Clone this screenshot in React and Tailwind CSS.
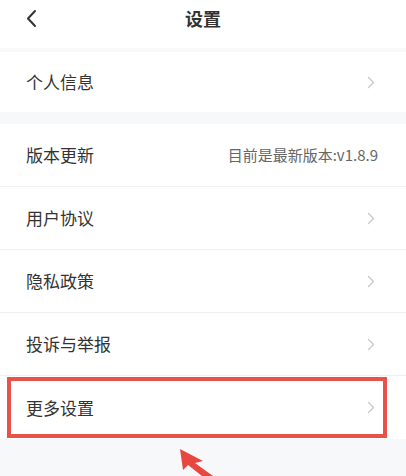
import React from "react";

const Chevron = () => (
  <svg width="8" height="13" viewBox="0 0 8 13" fill="none">
    <path d="M1.5 1.5L6.5 6.5L1.5 11.5" stroke="#c8c8c8" strokeWidth="1.3" strokeLinecap="round" strokeLinejoin="round" />
  </svg>
);

const Row = ({ label, right, last }) => (
  <div className={`flex items-center justify-between h-[63px] pl-[26px] pr-[31px] bg-white ${last ? "" : "border-b border-[#f0f0f0]"}`}>
    <span className="text-[17px] text-[#333]">{label}</span>
    {right ? <span className="text-[15px] text-[#666] -mr-[3px]">{right}</span> : <Chevron />}
  </div>
);

export default function App() {
  return (
    <div
      className="relative w-[406px] h-[476px] overflow-hidden bg-[#f7f8fa]"
      style={{ fontFamily: '"Noto Sans CJK SC", "Noto Sans", sans-serif' }}
    >
      <div className="relative flex items-center justify-center h-12 bg-white">
        <svg className="absolute left-[24px] top-[9px]" width="16" height="20" viewBox="0 0 16 20" fill="none">
          <path d="M11 2L4 9.5L11 17" stroke="#333" strokeWidth="2" strokeLinecap="round" strokeLinejoin="round" />
        </svg>
        <span className="text-[18px] font-bold text-[#333] -mt-[12px]">设置</span>
      </div>
      <div className="h-1 bg-[#f9f9fa]" />
      <div className="flex items-center justify-between h-[60px] pl-[26px] pr-[31px] bg-white">
        <span className="text-[17px] text-[#333]">个人信息</span>
        <Chevron />
      </div>
      <div className="h-3 bg-[#f7f8fa]" />
      <div className="flex flex-col bg-white">
        <Row label="版本更新" right="目前是最新版本:v1.8.9" />
        <Row label="用户协议" />
        <Row label="隐私政策" />
        <Row label="投诉与举报" />
        <Row label="更多设置" last />
      </div>
      <div className="absolute left-[7px] top-[377px] w-[380px] h-[61px] border-4 border-[#e8524b]" />
      <svg className="absolute left-0 top-0" width="406" height="476" viewBox="0 0 406 476" fill="none">
        <polygon points="180,449 203,461 195,463 213,476 202,476 188,465 183,470" fill="#e8473f" />
      </svg>
    </div>
  );
}
